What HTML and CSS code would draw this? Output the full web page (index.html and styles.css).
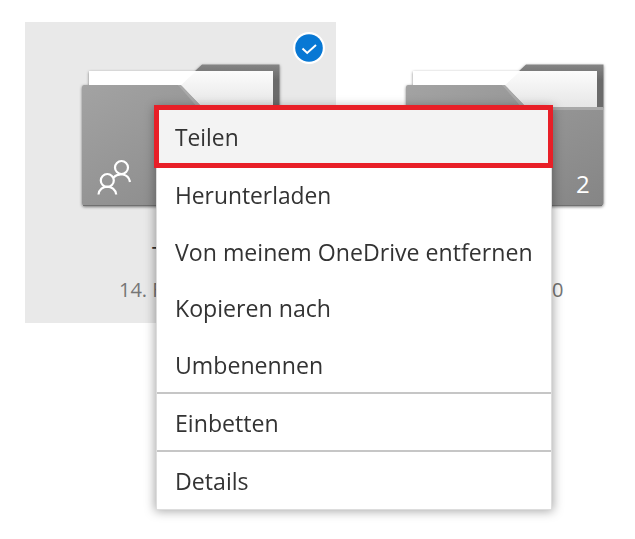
FILE: index.html
```
<!DOCTYPE html>
<html lang="de">
<head>
<meta charset="utf-8">
<title>OneDrive</title>
<link rel="stylesheet" href="styles.css">
</head>
<body>
<svg class="defs" width="0" height="0" aria-hidden="true">
  <defs>
    <linearGradient id="front" x1="0" y1="0" x2="1" y2="1"><stop offset="0" stop-color="#a3a3a3"/><stop offset="1" stop-color="#858585"/></linearGradient>
    <linearGradient id="back" x1="0" y1="0" x2="0" y2="1"><stop offset="0" stop-color="#858585"/><stop offset=".35" stop-color="#6b6b6b"/></linearGradient>
    <linearGradient id="paper" x1="0" y1="0" x2="0" y2="1"><stop offset="0" stop-color="#fcfcfc"/><stop offset="1" stop-color="#e6e6e6"/></linearGradient>
    <filter id="shade" x="-10%" y="-10%" width="120%" height="120%"><feDropShadow dx="0" dy="1" stdDeviation="1.5" flood-color="#000" flood-opacity=".5"/></filter>
    <symbol id="folder" viewBox="0 0 210 154">
      <g filter="url(#shade)">
        <path d="M118 14L126 6.500H203.500V50H118Z" fill="url(#back)"/>
        <path d="M13 13H197V50H13Z" fill="#fff"/>
        <path d="M6 29Q6 27 8 27H102Q105 27 107 29L126 49H203.500V145Q203.500 148 200 148H9Q6 148 6 145Z" fill="url(#front)"/>
      </g>
      <path d="M13 13H197V49H126L105 27 120 13Z" fill="url(#paper)"/>
      <path d="M13 13H120L105 27H13Z" fill="#fff"/>
      <path d="M203.500 49H126L105 27H102L124 52H203.500Z" fill="#a9a9a9"/>
      <path d="M7 147.500H202" stroke="#707070"/>
    </symbol>
  </defs>
</svg>
<main class="tiles">
  <section class="tile selected">
    <svg class="folder" width="210" height="154"><use href="#folder"/></svg>
    <svg class="people" width="34" height="37" viewBox="0 0 34 37" fill="none" stroke="#fff" stroke-width="2.200"><circle cx="24.500" cy="8.500" r="6.500"/><path d="M16.500 18.500C21 13.500 31.500 14 33 23"/><circle cx="10.300" cy="21.500" r="6.500"/><path d="M1.500 35.500C2.500 25 18 25 19.200 35.500"/></svg>
    <svg class="check" width="34" height="34" viewBox="0 0 34 34"><circle cx="17" cy="17" r="16" fill="#fff"/><circle cx="17" cy="17" r="13.800" fill="#0878d4"/><path d="M10.500 17.500L15.200 22 24 14" fill="none" stroke="#fff" stroke-width="2"/></svg>
    <div class="name">T</div>
    <div class="date">14. F</div>
  </section>
  <section class="tile">
    <svg class="folder" width="210" height="154"><use href="#folder"/></svg>
    <span class="count">2</span>
    <div class="name"></div>
    <div class="date end">0</div>
  </section>
</main>
<ul class="menu">
  <li class="item active"><span class="label narrow">Teilen</span></li>
  <li class="item"><span class="label narrow">Herunterladen</span></li>
  <li class="item"><span class="label">Von meinem OneDrive entfernen</span></li>
  <li class="item short"><span class="label">Kopieren nach</span></li>
  <li class="item short low"><span class="label">Umbenennen</span></li>
  <li class="item split low"><span class="label">Einbetten</span></li>
  <li class="item split low"><span class="label">Details</span></li>
</ul>
</body>
</html>
```
FILE: styles.css
```
* { box-sizing: border-box; }
body {
  margin: 0;
  width: 635px;
  height: 539px;
  overflow: hidden;
  background: #fff;
  font-family: "Open Sans", "Noto Sans", sans-serif;
  color: #333;
}
.defs { position: absolute; }
.tiles {
  display: grid;
  grid-template-columns: 311px 311px;
  column-gap: 13px;
  padding: 22px 0 0 25px;
}
.tile {
  position: relative;
  height: 301px;
  padding: 36px 0 0 51px;
}
.selected { background: #e9e9e9; }
.folder { display: block; }
.people { position: absolute; left: 72px; top: 137px; }
.check { position: absolute; left: 267px; top: 9px; }
.count {
  position: absolute;
  left: 227px;
  top: 145px;
  color: #fff;
  font-size: 24px;
  line-height: 34px;
}
.name {
  height: 34px;
  margin: 27px 0 0 76px;
  font-size: 23px;
  line-height: 32px;
}
.date {
  margin: 2px 0 0 43px;
  font-size: 20px;
  line-height: 30px;
  letter-spacing: 0;
  color: #767676;
  white-space: nowrap;
}
.end { margin-left: 152px; }
.menu {
  position: absolute;
  left: 156px;
  top: 108px;
  width: 396px;
  height: 402px;
  margin: 0;
  padding: 0;
  list-style: none;
  background: #fff;
  border: 1px solid #ddd;
  border-top: 0;
  box-shadow: 0 0 10px 1px rgba(0, 0, 0, .36);
}
.item {
  position: relative;
  display: flex;
  align-items: center;
  height: 57px;
  padding-left: 18px;
  font-size: 24px;
  line-height: 34px;
  white-space: nowrap;
}
.label { transform: scaleX(.964); transform-origin: 0 50%; }
.narrow { transform: scaleX(.95); }
.short { height: 56px; }
.split { height: 58px; border-top: 2px solid #c6c6c6; }
.low { padding-top: 2px; }
.active { height: 58px; padding-bottom: 1px; background: #f3f3f3; }
.active::after {
  content: "";
  position: absolute;
  left: -3px;
  right: -2px;
  top: -3px;
  bottom: -2px;
  border: 5px solid #e81f27;
}
```
